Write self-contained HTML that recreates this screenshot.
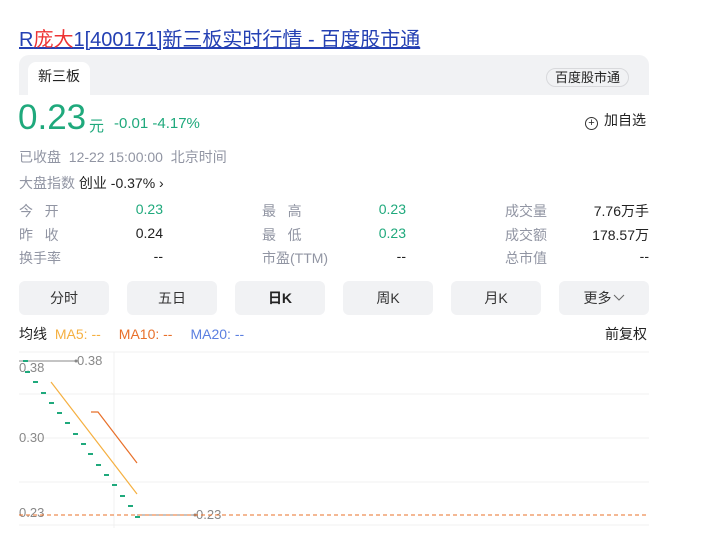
<!DOCTYPE html>
<html><head><meta charset="utf-8"><style>
*{margin:0;padding:0;box-sizing:border-box}
body{width:726px;height:537px;background:#fff;font-family:"Liberation Sans","Noto Sans CJK SC",sans-serif;position:relative;overflow:hidden;color:#222}
.a{position:absolute;white-space:nowrap}
.g{color:#9195a3}
.gr{color:#1fa97c}
.btn{position:absolute;top:281px;width:90px;height:34px;background:#f1f2f4;border-radius:6px;text-align:center;line-height:34px;font-size:14px;color:#333}
.lbl{font-size:14px;color:#9195a3}
.v{font-size:14px;text-align:right;width:60px}
</style></head><body>
<div class="a" style="left:19px;top:23px;font-size:20px;color:#2440b3;text-decoration:underline">R<span style="color:#e33">庞大</span>1[400171]新三板实时行情 - 百度股市通</div>
<div class="a" style="left:19px;top:55px;width:630px;height:40px;background:#f1f2f4;border-radius:10px 10px 0 0"></div>
<div class="a" style="left:28px;top:62px;width:62px;height:33px;background:#fff;border-radius:8px 8px 0 0;font-size:14px;text-align:center;line-height:28px;color:#222">新三板</div>
<div class="a" style="left:546px;top:68px;width:83px;height:19px;border:1px solid #d8d9dc;border-radius:10px;font-size:13px;text-align:center;line-height:17px;color:#222">百度股市通</div>
<div class="a gr" style="left:18px;top:98px;font-size:35px;line-height:40px">0.23</div>
<div class="a gr" style="left:89px;top:115px;font-size:15px">元</div>
<div class="a gr" style="left:114px;top:115px;font-size:15px">-0.01 -4.17%</div>
<div class="a" style="left:585px;top:110px;font-size:14px;color:#222"><span style="display:inline-block;width:13px;height:13px;border:1px solid #333;border-radius:50%;text-align:center;line-height:10px;font-size:11px;vertical-align:-1px;margin-right:6px">+</span>加自选</div>
<div class="a g" style="left:19px;top:147px;font-size:14px">已收盘&nbsp; 12-22 15:00:00&nbsp; 北京时间</div>
<div class="a" style="left:19px;top:173px;font-size:14px"><span class="g">大盘指数</span> 创业 -0.37% ›</div>

<div class="a lbl" style="left:19px;top:201px">今&nbsp;&nbsp;&nbsp;开</div>
<div class="a lbl" style="left:19px;top:225px">昨&nbsp;&nbsp;&nbsp;收</div>
<div class="a lbl" style="left:19px;top:248px">换手率</div>
<div class="a v gr" style="left:103px;top:201px">0.23</div>
<div class="a v" style="left:103px;top:225px">0.24</div>
<div class="a v" style="left:103px;top:248px">--</div>
<div class="a lbl" style="left:262px;top:201px">最&nbsp;&nbsp;&nbsp;高</div>
<div class="a lbl" style="left:262px;top:225px">最&nbsp;&nbsp;&nbsp;低</div>
<div class="a lbl" style="left:262px;top:248px">市盈(TTM)</div>
<div class="a v gr" style="left:346px;top:201px">0.23</div>
<div class="a v gr" style="left:346px;top:225px">0.23</div>
<div class="a v" style="left:346px;top:248px">--</div>
<div class="a lbl" style="left:505px;top:201px">成交量</div>
<div class="a lbl" style="left:505px;top:225px">成交额</div>
<div class="a lbl" style="left:505px;top:248px">总市值</div>
<div class="a v" style="left:569px;top:201px;width:80px">7.76万手</div>
<div class="a v" style="left:569px;top:225px;width:80px">178.57万</div>
<div class="a v" style="left:569px;top:248px;width:80px">--</div>

<div class="btn" style="left:19px">分时</div>
<div class="btn" style="left:127px">五日</div>
<div class="btn" style="left:235px;font-weight:bold;color:#222">日K</div>
<div class="btn" style="left:343px">周K</div>
<div class="btn" style="left:451px">月K</div>
<div class="btn" style="left:559px">更多<svg width="12" height="8" style="vertical-align:1px;margin-left:1px"><polyline points="1,1 6,6 11,1" fill="none" stroke="#666" stroke-width="1"/></svg></div>

<div class="a" style="left:19px;top:324px;font-size:14px">均线 <span style="color:#f5b041;margin-left:4px">MA5: --</span><span style="color:#e8702a;margin-left:18px">MA10: --</span><span style="color:#5b7fe0;margin-left:18px">MA20: --</span></div>
<div class="a" style="left:605px;top:324px;font-size:14px">前复权</div>

<svg class="a" style="left:0;top:340px" width="726" height="197">
<g stroke="#f0f0f0" stroke-width="1">
<line x1="19" y1="12" x2="649" y2="12"/><line x1="19" y1="54" x2="649" y2="54"/><line x1="19" y1="98" x2="649" y2="98"/><line x1="19" y1="142" x2="649" y2="142"/><line x1="19" y1="185" x2="649" y2="185"/>
<line x1="114" y1="12" x2="114" y2="188"/></g>
<g fill="#888" font-size="13" font-family="Liberation Sans">
<text x="19" y="32">0.38</text><text x="19" y="102">0.30</text><text x="19" y="177">0.23</text>
<text x="77" y="25">0.38</text><text x="196" y="179">0.23</text></g>
<line x1="19" y1="21" x2="76" y2="21" stroke="#888"/><circle cx="76" cy="21" r="1.5" fill="#888"/>
<line x1="137" y1="175" x2="195" y2="175" stroke="#888"/><circle cx="195" cy="175" r="1.5" fill="#888"/>
<line x1="19" y1="175" x2="649" y2="175" stroke="#e8702a" stroke-dasharray="4,3"/>
<line x1="51" y1="42" x2="137" y2="154" stroke="#f5b041" stroke-width="1.2"/>
<polyline points="91,72 98,72 137,123" fill="none" stroke="#e8702a" stroke-width="1.2"/>
<g stroke="#1fa97c" stroke-width="2">
<line x1="23" y1="21" x2="28" y2="21"/>
<line x1="25" y1="32" x2="30" y2="32"/><line x1="33" y1="42" x2="38" y2="42"/><line x1="41" y1="53" x2="46" y2="53"/><line x1="49" y1="63" x2="54" y2="63"/><line x1="57" y1="73" x2="62" y2="73"/><line x1="65" y1="83" x2="70" y2="83"/><line x1="73" y1="94" x2="78" y2="94"/><line x1="81" y1="104" x2="86" y2="104"/><line x1="88" y1="114" x2="93" y2="114"/><line x1="96" y1="125" x2="101" y2="125"/><line x1="104" y1="135" x2="109" y2="135"/><line x1="112" y1="145" x2="117" y2="145"/><line x1="120" y1="156" x2="125" y2="156"/><line x1="128" y1="166" x2="133" y2="166"/><line x1="135" y1="177" x2="140" y2="177"/></g>
</svg>
</body></html>
